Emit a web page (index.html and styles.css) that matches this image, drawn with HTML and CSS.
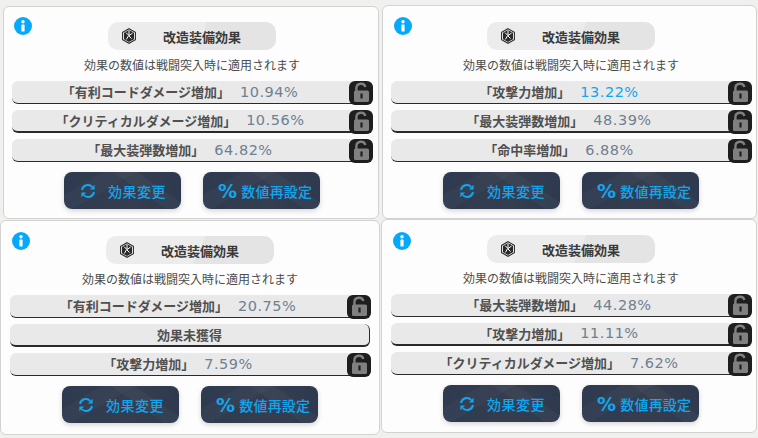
FILE: index.html
```html
<!DOCTYPE html>
<html lang="ja">
<head>
<meta charset="utf-8">
<title>改造装備効果</title>
<link rel="stylesheet" href="styles.css">
</head>
<body>
<svg class="defs" width="0" height="0" aria-hidden="true">
  <defs>
    <symbol id="i-info" viewBox="0 0 18 18">
      <circle cx="9" cy="9" r="9" fill="#05a9fb"/>
      <circle cx="9" cy="4.8" r="1.7" fill="#fff"/>
      <rect x="7.4" y="7.6" width="3.2" height="7" rx=".6" fill="#fff"/>
    </symbol>
    <symbol id="i-hex" viewBox="0 0 16 16">
      <path d="M8 .7 14.4 4.3V11.7L8 15.3 1.6 11.7V4.3Z" fill="#fff" stroke="#2b2b2b" stroke-width="1.1"/>
      <path d="M3 4.8 8 2.1 13 4.8V11.2L8 14 3 11.2Z" fill="#2b2b2b"/>
      <path d="M8 2.4V7M5 4.6 8 7.6 11.6 5M5.4 11.4 7.6 7.6 10.6 10.6" fill="none" stroke="#fff" stroke-width="1"/>
    </symbol>
    <symbol id="i-lock" viewBox="0 0 24 24">
      <rect x="0" y="0" width="24" height="24" rx="6" fill="#1e1e1e"/>
      <path d="M7.4 10V7.4a4.6 4.6 0 0 1 9-1.4" fill="none" stroke="#808080" stroke-width="2.4"/>
      <rect x="5" y="9.5" width="15" height="11.5" rx="1.6" fill="#808080"/>
      <rect x="11.4" y="12.5" width="2.2" height="5" fill="#1e1e1e"/>
    </symbol>
    <symbol id="i-sync" viewBox="0 0 16 16">
      <path d="M2 7a6 6 0 0 1 10.2-3.2" fill="none" stroke="#10a6f0" stroke-width="1.9"/>
      <path d="M14.6 1.8V6.6H9.8Z" fill="#10a6f0"/>
      <path d="M14 9a6 6 0 0 1-10.2 3.2" fill="none" stroke="#10a6f0" stroke-width="1.9"/>
      <path d="M1.4 14.2V9.4H6.2Z" fill="#10a6f0"/>
    </symbol>
  </defs>
</svg>
<main class="board">

  <section class="card card-a">
    <svg class="info"><use href="#i-info"/></svg>
    <div class="pill"><svg class="hex"><use href="#i-hex"/></svg><span>改造装備効果</span></div>
    <p class="note">効果の数値は戦闘突入時に適用されます</p>
    <div class="rows">
      <div class="row"><span class="name">「有利コードダメージ増加」</span><span class="val">10.94%</span><svg class="lock"><use href="#i-lock"/></svg></div>
      <div class="row"><span class="name">「クリティカルダメージ増加」</span><span class="val">10.56%</span><svg class="lock"><use href="#i-lock"/></svg></div>
      <div class="row"><span class="name">「最大装弾数増加」</span><span class="val">64.82%</span><svg class="lock"><use href="#i-lock"/></svg></div>
    </div>
    <div class="actions">
      <button class="btn"><svg class="sync"><use href="#i-sync"/></svg><span>効果変更</span></button>
      <button class="btn btn-pct"><b class="pct">%</b><span>数値再設定</span></button>
    </div>
  </section>

  <section class="card card-b">
    <svg class="info"><use href="#i-info"/></svg>
    <div class="pill"><svg class="hex"><use href="#i-hex"/></svg><span>改造装備効果</span></div>
    <p class="note">効果の数値は戦闘突入時に適用されます</p>
    <div class="rows">
      <div class="row"><span class="name">「攻撃力増加」</span><span class="val val-hi">13.22%</span><svg class="lock"><use href="#i-lock"/></svg></div>
      <div class="row"><span class="name">「最大装弾数増加」</span><span class="val">48.39%</span><svg class="lock"><use href="#i-lock"/></svg></div>
      <div class="row"><span class="name">「命中率増加」</span><span class="val">6.88%</span><svg class="lock"><use href="#i-lock"/></svg></div>
    </div>
    <div class="actions">
      <button class="btn"><svg class="sync"><use href="#i-sync"/></svg><span>効果変更</span></button>
      <button class="btn btn-pct"><b class="pct">%</b><span>数値再設定</span></button>
    </div>
  </section>

  <section class="card card-c">
    <svg class="info"><use href="#i-info"/></svg>
    <div class="pill"><svg class="hex"><use href="#i-hex"/></svg><span>改造装備効果</span></div>
    <p class="note">効果の数値は戦闘突入時に適用されます</p>
    <div class="rows">
      <div class="row"><span class="name">「有利コードダメージ増加」</span><span class="val">20.75%</span><svg class="lock"><use href="#i-lock"/></svg></div>
      <div class="row row-empty"><span class="name">効果未獲得</span></div>
      <div class="row"><span class="name">「攻撃力増加」</span><span class="val">7.59%</span><svg class="lock"><use href="#i-lock"/></svg></div>
    </div>
    <div class="actions">
      <button class="btn"><svg class="sync"><use href="#i-sync"/></svg><span>効果変更</span></button>
      <button class="btn btn-pct"><b class="pct">%</b><span>数値再設定</span></button>
    </div>
  </section>

  <section class="card card-d">
    <svg class="info"><use href="#i-info"/></svg>
    <div class="pill"><svg class="hex"><use href="#i-hex"/></svg><span>改造装備効果</span></div>
    <p class="note">効果の数値は戦闘突入時に適用されます</p>
    <div class="rows">
      <div class="row"><span class="name">「最大装弾数増加」</span><span class="val">44.28%</span><svg class="lock"><use href="#i-lock"/></svg></div>
      <div class="row"><span class="name">「攻撃力増加」</span><span class="val">11.11%</span><svg class="lock"><use href="#i-lock"/></svg></div>
      <div class="row"><span class="name">「クリティカルダメージ増加」</span><span class="val">7.62%</span><svg class="lock"><use href="#i-lock"/></svg></div>
    </div>
    <div class="actions">
      <button class="btn"><svg class="sync"><use href="#i-sync"/></svg><span>効果変更</span></button>
      <button class="btn btn-pct"><b class="pct">%</b><span>数値再設定</span></button>
    </div>
  </section>

</main>
</body>
</html>
```

FILE: styles.css
```css
* { box-sizing: border-box; }
html, body { margin: 0; height: 100%; }
body {
  background: #f0f1ef;
  font-family: "Noto Sans CJK JP", "Noto Sans", sans-serif;
  overflow: hidden;
}
.defs { display: block; width: 0; height: 0; }
.board {
  display: grid;
  grid-template-columns: 381px 377px;
  grid-template-rows: 219px 219px;
}
.card {
  position: relative;
  display: flex;
  flex-direction: column;
  background: #fdfdfd;
  border: 1px solid #d2d2d0;
  border-radius: 6px;
  padding: 15px 5px 0 8px;
}
.card-a { margin: 6px 2px 0 3px; padding-right: 6px; }
.card-b { margin: 5px 1px 0 1px; padding-top: 16px; }
.card-c { margin: 1px 1px 3px 0; padding-left: 9px; padding-right: 9px; }
.card-d { margin: 0 1px 5px 0; padding-left: 9px; }

.info { position: absolute; left: 10px; top: 10px; width: 18px; height: 18px; }
.card-b .info { left: 11px; top: 11px; }
.card-c .info { left: 11px; top: 11px; }
.card-d .info { left: 11px; top: 12px; }

.pill {
  align-self: center;
  display: flex;
  align-items: center;
  width: 168px;
  height: 28px;
  padding-left: 13px;
  border-radius: 10px;
  background: linear-gradient(115deg, #ececec 0 55%, #e4e4e4 55% 100%);
  color: #3a3a3a;
  font-size: 13px;
  font-weight: 700;
}
.hex { width: 16px; height: 16px; margin-right: 26px; flex: none; }

.note {
  margin: 6px 0 7px;
  height: 18px;
  line-height: 18px;
  text-align: center;
  font-size: 12px;
  color: #4c4c4c;
}
.rows { display: flex; flex-direction: column; gap: 6px; }
.row {
  position: relative;
  display: flex;
  align-items: center;
  justify-content: center;
  height: 23px;
  padding: 0 24px 1px 0;
  background: #e9e9e9;
  border-bottom: 1px solid #2a2a2a;
  border-radius: 6px;
}
.row:nth-child(2) { border-bottom-width: 2px; }
.row-empty {
  padding-right: 0;
  border-right: 1px solid #2a2a2a;
}
.name { font-size: 13px; font-weight: 700; color: #505050; }
.val {
  margin-left: 10px;
  font-family: "DejaVu Sans", sans-serif;
  font-size: 14.5px;
  letter-spacing: .5px;
  color: #6e8092;
}
.val-hi { color: #12a5ec; }
.lock { position: absolute; right: -1px; top: 0; width: 24px; height: 24px; }

.actions {
  display: flex;
  justify-content: center;
  gap: 22px;
  margin-top: 10px;
}
.btn {
  display: flex;
  align-items: center;
  gap: 12px;
  width: 117px;
  height: 37px;
  padding: 0 0 0 16px;
  border: 0;
  border-radius: 8px;
  font: inherit;
  font-size: 14px;
  font-weight: 500;
  letter-spacing: .5px;
  color: #10a6f0;
  box-shadow: 0 2px 5px rgba(0, 0, 0, .16);
  background:
    linear-gradient(150deg, transparent 0 22%, rgba(255,255,255,.025) 22% 40%, transparent 40%),
    linear-gradient(35deg, transparent 0 60%, rgba(255,255,255,.03) 60% 74%, transparent 74%),
    linear-gradient(100deg, #2e3a50, #353e4f 60%, #2e394f);
}
.btn-pct { gap: 4px; padding-left: 15px; letter-spacing: .2px; }
.sync { width: 16px; height: 16px; flex: none; }
.pct { font-family: "DejaVu Sans", sans-serif; font-size: 19px; font-weight: 700; }
```
